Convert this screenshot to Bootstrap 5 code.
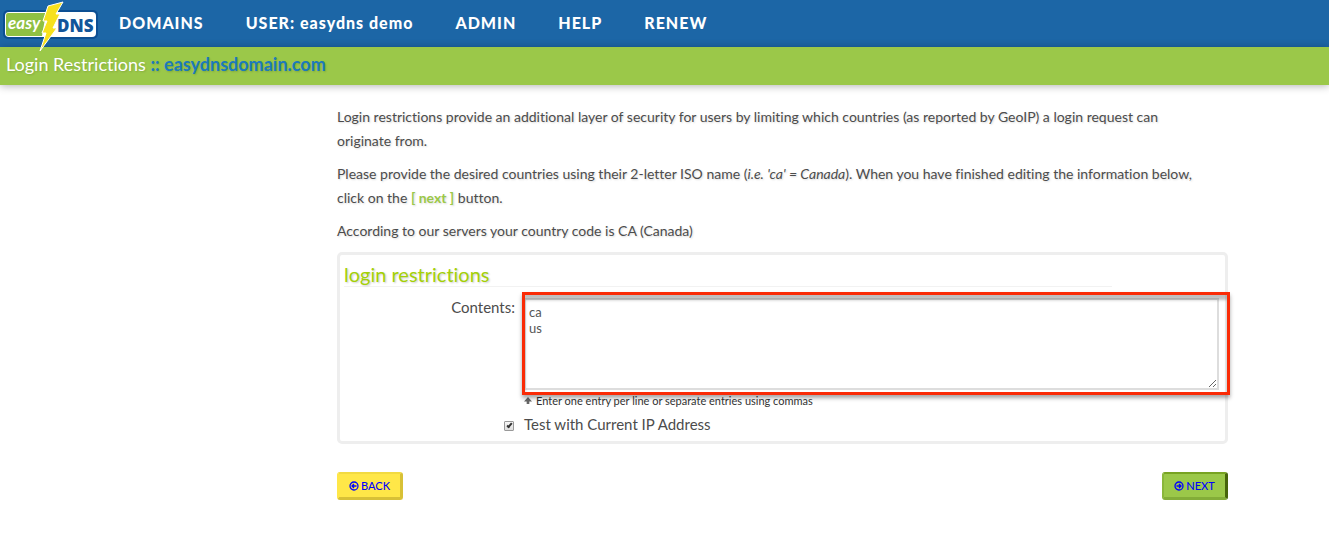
<!DOCTYPE html>
<html lang="en">
<head>
<meta charset="utf-8">
<meta name="viewport" content="width=device-width, initial-scale=1">
<title>Login Restrictions</title>
<link href="https://cdn.jsdelivr.net/npm/bootstrap@5.3.0/dist/css/bootstrap.min.css" rel="stylesheet">
<style>
body { font-family: Lato, "Liberation Sans", sans-serif; font-size: 14px; line-height: 24px; color: #4c4c4c; background: #fff; font-variant-ligatures: none; }
.topbar { background: #1c66a6; height: 47px; padding: 0 3px; }
.brand { position: relative; z-index: 2; width: 96px; height: 47px; }
.brand svg { display: block; overflow: visible; }
.topbar .nav { gap: 42px; margin-left: 20px; }
.topbar .nav-link { padding: 0; color: #fff; font-family: "Lato Black", Lato, sans-serif; font-size: 16px; font-weight: 900; letter-spacing: 1px; line-height: 45px; }
.titlebar { background: #9bc849; height: 38px; padding: 0 6px; box-shadow: 0 1px 8px rgba(0,0,0,.3); }
.titlebar h1 { font-size: 18px; line-height: 34px; color: #fff; font-weight: 400; text-shadow: 1px 1px 2px rgba(0,0,0,.15); }
.titlebar strong { color: #1c7abb; font-weight: 700; }
.page { max-width: 1127px; padding-top: 20px; }
.side { width: 236px; }
.intro { padding-right: 20px; }
.intro p { margin-bottom: 9px; text-shadow: 1px 1px 2px rgba(0,0,0,.15); }
.next-word { color: #9bc849; font-weight: 700; }
.panel { border: 3px solid #eee; border-radius: 5px; padding: 7px 4px 5px; }
.panel legend { float: none; width: 768px; max-width: 100%; margin: 0 0 8px; font-size: 20px; line-height: 24px; color: #a4d007; border-bottom: 1px solid #f2f2f2; text-shadow: 1px 1px 2px rgba(0,0,0,.2); }
.label-col { width: 180px; padding-right: 9px; text-align: right; }
.panel label { font-size: 15px; }
.field { position: relative; padding-top: 3px; margin-right: 2px; }
.entries { display: block; width: 100%; height: 92px; border: 2px solid #ddd; padding: 4px 3px; font-size: 13px; line-height: 16px; color: #555; border-radius: 0; outline: 0; }
.callout { position: absolute; top: -3px; left: -2px; right: -11px; height: 103px; border: 3px solid #fa2b06; box-shadow: 0 3px 4px rgba(0,0,0,.35), inset 0 5px 3px rgba(0,0,0,.25); pointer-events: none; }
.hint { font-size: 11px; line-height: 14px; color: #333; padding-top: 4px; }
.tick { width: 10px; height: 10px; margin: 4px 1px 0 0; border: 1px solid #999; border-radius: 1px; appearance: none; background: linear-gradient(#f8f8f8, #ddd); position: relative; }
.tick:checked::after { content: ""; position: absolute; left: 3px; top: 0; width: 3px; height: 6px; border: solid #333; border-width: 0 2px 2px 0; transform: rotate(40deg); }
.act { border-radius: 3px; height: 28px; min-width: 66px; padding: 0 9px; font-size: 11px; font-weight: 500; line-height: 22px; color: #00f; border: 3px solid; border-top-width: 2px; border-left-width: 2px; gap: 2px; }
.act-back { background: #ffe748; border-color: #f2da41 #d8c136 #d8c136 #ffe748; }
.act-next { background: #9bc849; border-color: #78a322 #47650b #83ad38 #8ab73b; }
</style>
</head>
<body>
<header>
  <nav class="topbar d-flex" aria-label="Main">
    <a href="#" class="brand" aria-label="easyDNS">
      <svg width="96" height="54" viewBox="3 0 96 54">
        <rect x="3" y="10" width="95" height="29" rx="5" fill="#0c4f93"/>
        <rect x="5" y="12" width="91" height="25" rx="4" fill="#fff"/>
        <path d="M8 13H46L42 36H8Q6 36 6 34V15Q6 13 8 13Z" fill="#8fc043"/>
        <text x="8" y="29" font-family="Lato" font-size="17" font-style="italic" font-weight="700" fill="#fff">easy</text>
        <text x="57" y="32" font-family="Open Sans" font-size="17" font-weight="800" fill="#12559a">DNS</text>
        <path d="M63 2L48 6L43 21H47L42 33H46L40 51L57 28H53L60 14H56Z" fill="#f7e11d" stroke="#fff" stroke-width="1"/>
      </svg>
    </a>
    <div class="nav flex-nowrap">
      <a class="nav-link" href="#">DOMAINS</a>
      <a class="nav-link" href="#">USER: easydns demo</a>
      <a class="nav-link" href="#">ADMIN</a>
      <a class="nav-link" href="#">HELP</a>
      <a class="nav-link" href="#">RENEW</a>
    </div>
  </nav>
  <div class="titlebar">
    <h1 class="m-0">Login Restrictions <strong>:: easydnsdomain.com</strong></h1>
  </div>
</header>
<div class="page d-flex mx-auto">
  <div class="side flex-shrink-0"></div>
  <main class="flex-grow-1">
    <div class="intro">
      <p>Login restrictions provide an additional layer of security for users by limiting which countries (as reported by GeoIP) a login request can originate from.</p>
      <p>Please provide the desired countries using their 2-letter ISO name (<em>i.e. 'ca' = Canada</em>). When you have finished editing the information below, click on the <span class="next-word">[ next ]</span> button.</p>
      <p>According to our servers your country code is CA (Canada)</p>
    </div>
    <form>
      <div class="panel" role="group" aria-labelledby="panel-title">
        <legend id="panel-title">login restrictions</legend>
        <div class="d-flex">
          <label class="label-col flex-shrink-0" for="entries">Contents:</label>
          <div class="flex-grow-1">
            <div class="field">
              <textarea class="entries" id="entries">ca
us</textarea>
              <div class="callout"></div>
            </div>
            <div class="hint d-flex align-items-center gap-1">
              <svg width="8" height="8" viewBox="0 0 9 9"><path d="M4.500 0L9 5H6V8H3V5H0Z" fill="#666"/></svg>
              <span>Enter one entry per line or separate entries using commas</span>
            </div>
          </div>
        </div>
        <div class="d-flex align-items-center pt-1">
          <div class="label-col flex-shrink-0 d-flex justify-content-end"><input class="tick" type="checkbox" id="test-ip" checked></div>
          <label for="test-ip">Test with Current IP Address</label>
        </div>
      </div>
      <div class="d-flex justify-content-between mt-4 pt-1">
        <button type="button" class="act act-back d-flex align-items-center justify-content-center">
          <svg width="10" height="10" viewBox="0 0 10 10" fill="none" stroke="#00f" stroke-width="1.300"><circle cx="5" cy="5" r="4"/><path d="M7.500 5H3M5 3L3 5L5 7"/></svg>BACK</button>
        <button type="button" class="act act-next d-flex align-items-center justify-content-center">
          <svg width="10" height="10" viewBox="0 0 10 10" fill="none" stroke="#00f" stroke-width="1.300"><circle cx="5" cy="5" r="4"/><path d="M2.500 5H7M5 3L7 5L5 7"/></svg>NEXT</button>
      </div>
    </form>
  </main>
</div>
<script src="https://cdn.jsdelivr.net/npm/bootstrap@5.3.0/dist/js/bootstrap.bundle.min.js"></script>
</body>
</html>
